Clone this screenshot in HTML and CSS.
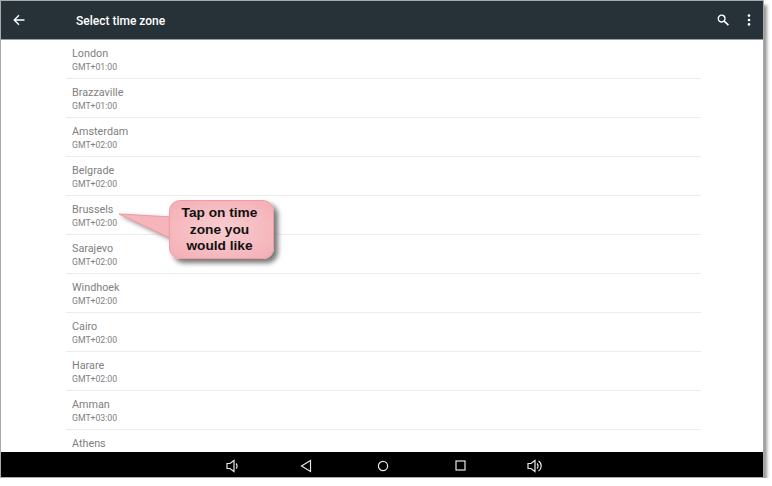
FILE: index.html
```html
<!DOCTYPE html>
<html lang="en">
<head>
    <meta charset="UTF-8">
    <title>Select time zone</title>
    <link rel="stylesheet" href="styles.css">
</head>
<body>

    <div class="screen">
        <!-- Top bar -->
        <header class="app-bar">
            <svg class="back-icon" width="12" height="12" viewBox="0 0 12 12">
                <path d="M11.5 6H1.5M6 1.3 1.2 6 6 10.7" fill="none" stroke="#fff" stroke-width="1.3"/>
            </svg>
            <h1>Select time zone</h1>
            <svg class="search-icon" width="12" height="12" viewBox="0 0 12 12">
                <circle cx="4.6" cy="4.6" r="3.4" fill="none" stroke="#fff" stroke-width="1.3"/>
                <path d="M7.2 7.2 11.4 11.2" stroke="#fff" stroke-width="1.6"/>
            </svg>
            <svg class="more-icon" width="4" height="12" viewBox="0 0 4 12">
                <circle cx="2" cy="1.6" r="1.3" fill="#fff"/>
                <circle cx="2" cy="6" r="1.3" fill="#fff"/>
                <circle cx="2" cy="10.4" r="1.3" fill="#fff"/>
            </svg>
        </header>

        <!-- Time zone list -->
        <ul class="zone-list">
            <li><span class="city">London</span><span class="offset">GMT+01:00</span></li>
            <li><span class="city">Brazzaville</span><span class="offset">GMT+01:00</span></li>
            <li><span class="city">Amsterdam</span><span class="offset">GMT+02:00</span></li>
            <li><span class="city">Belgrade</span><span class="offset">GMT+02:00</span></li>
            <li><span class="city">Brussels</span><span class="offset">GMT+02:00</span></li>
            <li><span class="city">Sarajevo</span><span class="offset">GMT+02:00</span></li>
            <li><span class="city">Windhoek</span><span class="offset">GMT+02:00</span></li>
            <li><span class="city">Cairo</span><span class="offset">GMT+02:00</span></li>
            <li><span class="city">Harare</span><span class="offset">GMT+02:00</span></li>
            <li><span class="city">Amman</span><span class="offset">GMT+03:00</span></li>
            <li><span class="city">Athens</span></li>
        </ul>

        <!-- Navigation bar -->
        <footer class="nav-bar">
            <svg width="12" height="14" viewBox="0 0 12 14" fill="none" stroke="#e8e8e8" stroke-width="1.2">
                <path d="M1 4.5h3L8 1.5v11l-4-3H1z"/>
                <path d="M10 4.5a3.5 3.5 0 0 1 0 5"/>
            </svg>
            <svg width="12" height="14" viewBox="0 0 12 14" fill="none" stroke="#e8e8e8" stroke-width="1.2">
                <path d="M10.5 1.5v11L1.5 7z"/>
            </svg>
            <svg width="12" height="12" viewBox="0 0 12 12" fill="none" stroke="#e8e8e8" stroke-width="1.2">
                <circle cx="6" cy="6" r="4.6"/>
            </svg>
            <svg width="11" height="11" viewBox="0 0 11 11" fill="none" stroke="#e8e8e8" stroke-width="1.2">
                <rect x="1" y="1" width="9" height="9"/>
            </svg>
            <svg width="15" height="14" viewBox="0 0 15 14" fill="none" stroke="#e8e8e8" stroke-width="1.2">
                <path d="M1 4.5h3L8 1.5v11l-4-3H1z"/>
                <path d="M10 4.5a3.5 3.5 0 0 1 0 5M11.5 2a6 6 0 0 1 0 10"/>
            </svg>
        </footer>

        <!-- Callout over the list -->
        <svg class="callout-tail" width="60" height="30" viewBox="0 0 60 30">
            <path d="M54 4 1 1 54 26z" fill="#f5b5ba" stroke="#ee9aa0"/>
        </svg>
        <div class="callout">Tap on time zone you would like</div>
    </div>

</body>
</html>
```

FILE: styles.css
```css
body {
    margin: 0;
    background-color: white;
    font-family: Roboto, Arial, sans-serif;
}
.screen {
    position: relative;
    display: flex;
    flex-direction: column;
    width: 762px;
    height: 476px;
    margin: 1px;
    background-color: white;
    box-shadow: 1px 0 0 #999, 4px 4px 3px #999;
    outline: 1px solid #aaa;
}
.app-bar {
    display: flex;
    align-items: center;
    flex: none;
    height: 38px;
    background-color: #263238;
    border-bottom: 1px solid #9aa0a3;
}
.back-icon {
    margin-left: 12px;
}
.app-bar h1 {
    flex: 1;
    margin: 1px 0 0 51px;
    font-size: 12px;
    font-weight: 500;
    color: white;
}
.search-icon {
    margin-right: 18px;
}
.more-icon {
    margin-right: 12px;
}
.zone-list {
    flex: 1;
    margin: 0 62px 0 65px;
    padding: 0;
    list-style: none;
    overflow: hidden;
}
.zone-list li {
    height: 38px;
    padding-left: 6px;
    border-bottom: 1px solid #ececec;
}
.city {
    display: block;
    padding-top: 7px;
    font-size: 10.8px;
    line-height: 14px;
    color: #808080;
}
.offset {
    display: block;
    font-size: 8.7px;
    line-height: 12px;
    color: #808080;
}
.nav-bar {
    display: grid;
    grid-template-columns: 74px 74px 80px 74px 74px;
    justify-content: center;
    justify-items: center;
    align-items: center;
    flex: none;
    height: 25px;
    padding: 2px 0 0 2px;
    box-sizing: border-box;
    background-color: black;
}
.callout {
    position: absolute;
    left: 168px;
    top: 199px;
    box-sizing: border-box;
    width: 105px;
    height: 59px;
    padding: 4px 9px 4px 5px;
    font-family: "Liberation Sans", Arial, sans-serif;
    font-size: 13.7px;
    font-weight: bold;
    line-height: 16.5px;
    text-align: center;
    color: #111;
    background: radial-gradient(#f8cdd0, #f4aeb4);
    border: 1px solid #ee9ca2;
    border-radius: 11px;
    box-shadow: 4px 4px 5px #777;
}
.callout-tail {
    position: absolute;
    left: 117px;
    top: 212px;
    filter: drop-shadow(2px 2px 2px #999);
}
```
